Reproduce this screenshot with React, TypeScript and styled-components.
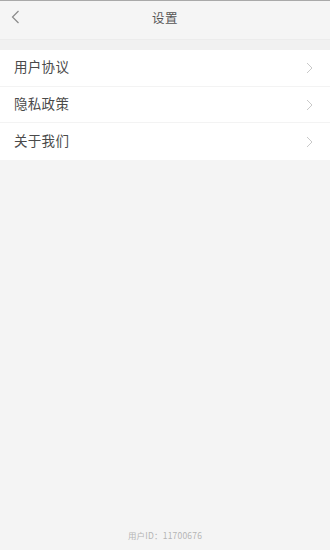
import React from "react";
import styled, { createGlobalStyle } from "styled-components";

const Global = createGlobalStyle`
  html, body { margin: 0; padding: 0; background: #f4f4f4; }
  body { font-family: "Noto Sans CJK SC", "Noto Sans", sans-serif; }
  #root { min-height: 550px; }
`;

const Page = styled.div`
  width: 330px;
  height: 550px;
  display: flex;
  flex-direction: column;
  background: #f4f4f4;
  border-top: 1px solid #a9a9a9;
  box-sizing: border-box;
`;

const Header = styled.header`
  height: 38px;
  display: grid;
  grid-template-columns: 40px 1fr 40px;
  align-items: center;
  background: #f5f5f5;
  border-bottom: 1px solid #ececec;
`;

const BackButton = styled.div`
  display: flex;
  align-items: center;
  padding-left: 11px;
  height: 100%;
  padding-bottom: 6px;
  box-sizing: border-box;
`;

const Title = styled.h1`
  margin: 0;
  text-align: center;
  font-size: 12.5px;
  font-weight: 400;
  color: #555;
  letter-spacing: 0.5px;
  padding-bottom: 6px;
`;

const Gap = styled.div`
  height: 10px;
  background: #f1f1f1;
`;

const List = styled.div`
  background: #fff;
  display: flex;
  flex-direction: column;
`;

const Row = styled.div<{ $last?: boolean }>`
  height: 36.7px;
  display: flex;
  align-items: center;
  justify-content: space-between;
  padding: 0 17px 0 14px;
  border-bottom: ${(p) => (p.$last ? "none" : "1px solid #f3f3f3")};
  box-sizing: border-box;
`;

const Label = styled.span`
  font-size: 13.5px;
  color: #4a4a4a;
  letter-spacing: 0.3px;
  padding-bottom: 3px;
`;

const Spacer = styled.div`
  flex: 1;
`;

const Footer = styled.div`
  height: 21px;
  display: flex;
  align-items: flex-start;
  justify-content: center;
  font-size: 8.5px;
  color: #b5b5b5;
  letter-spacing: 0.2px;
`;

const Chevron = () => (
  <svg width="7" height="12" viewBox="0 0 7 12" fill="none">
    <path d="M1 1 L6 6 L1 11" stroke="#c9c9c9" strokeWidth="1" />
  </svg>
);

const BackIcon = () => (
  <svg width="9" height="14" viewBox="0 0 9 14" fill="none">
    <path d="M7.5 1 L1.5 7 L7.5 13" stroke="#8a8a8a" strokeWidth="1.2" />
  </svg>
);

const items = ["用户协议", "隐私政策", "关于我们"];

export default function App() {
  return (
    <>
      <Global />
      <Page>
        <Header>
          <BackButton>
            <BackIcon />
          </BackButton>
          <Title>设置</Title>
          <div />
        </Header>
        <Gap />
        <List>
          {items.map((t, i) => (
            <Row key={t} $last={i === items.length - 1}>
              <Label>{t}</Label>
              <Chevron />
            </Row>
          ))}
        </List>
        <Spacer />
        <Footer>用户ID：11700676</Footer>
      </Page>
    </>
  );
}
